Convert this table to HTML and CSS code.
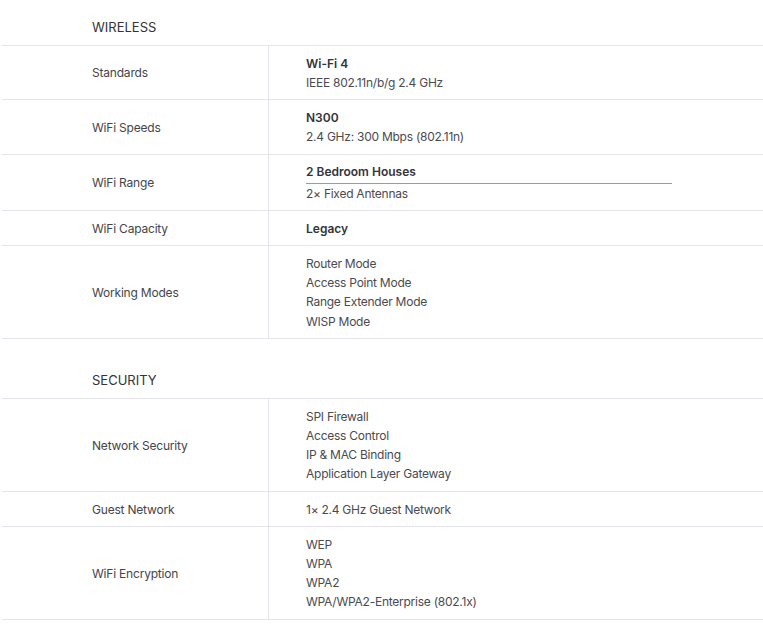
FILE: index.html
```html
<!DOCTYPE html>
<html lang="en">
<head>
<meta charset="utf-8">
<title>Specifications</title>
<link rel="stylesheet" href="styles.css">
</head>
<body>
<div class="specs">
  <section class="group">
    <h2 class="group-title">WIRELESS</h2>
    <div class="row">
      <div class="label">Standards</div>
      <div class="value"><div class="strong">Wi-Fi 4</div><div>IEEE 802.11n/b/g 2.4 GHz</div></div>
    </div>
    <div class="row">
      <div class="label">WiFi Speeds</div>
      <div class="value"><div class="strong">N300</div><div>2.4 GHz: 300 Mbps (802.11n)</div></div>
    </div>
    <div class="row">
      <div class="label">WiFi Range</div>
      <div class="value"><div class="inner"><div class="strong underlined">2 Bedroom Houses</div><div>2× Fixed Antennas</div></div></div>
    </div>
    <div class="row">
      <div class="label">WiFi Capacity</div>
      <div class="value"><div class="strong">Legacy</div></div>
    </div>
    <div class="row">
      <div class="label">Working Modes</div>
      <div class="value"><div>Router Mode</div><div>Access Point Mode</div><div>Range Extender Mode</div><div>WISP Mode</div></div>
    </div>
  </section>
  <section class="group">
    <h2 class="group-title">SECURITY</h2>
    <div class="row">
      <div class="label">Network Security</div>
      <div class="value"><div>SPI Firewall</div><div>Access Control</div><div>IP &amp; MAC Binding</div><div>Application Layer Gateway</div></div>
    </div>
    <div class="row">
      <div class="label">Guest Network</div>
      <div class="value"><div>1× 2.4 GHz Guest Network</div></div>
    </div>
    <div class="row">
      <div class="label">WiFi Encryption</div>
      <div class="value"><div>WEP</div><div>WPA</div><div>WPA2</div><div>WPA/WPA2-Enterprise (802.1x)</div></div>
    </div>
  </section>
</div>
</body>
</html>
```

FILE: styles.css
```css
html, body {
  margin: 0;
  padding: 0;
  background: #ffffff;
}

body {
  font-family: Inter, "Noto Sans", "Liberation Sans", sans-serif;
  font-size: 12px;
  color: #4a4a50;
}

.specs {
  margin-left: 2px;
}

.group + .group {
  margin-top: 14px;
}

.group-title {
  margin: 0;
  padding: 17px 0 8px 90px;
  font-size: 13px;
  font-weight: 400;
  line-height: 20px;
  color: #333338;
  border-bottom: 1px solid #e4e4ea;
}

.row {
  display: grid;
  grid-template-columns: 267px 1fr;
  border-bottom: 1px solid #e4e4ea;
}

.label {
  display: flex;
  align-items: center;
  padding-left: 90px;
  border-right: 1px solid #e4e4ea;
  color: #444449;
  line-height: 19.2px;
  letter-spacing: -0.2px;
}

.value {
  padding: 7.5px 0 7.5px 37px;
  line-height: 19.2px;
  letter-spacing: -0.25px;
}

.strong {
  font-weight: 600;
  color: #333338;
  letter-spacing: 0;
}

.inner {
  width: 80%;
}

.underlined {
  border-bottom: 1px solid #9c9c9c;
  padding-bottom: 1px;
}
```
